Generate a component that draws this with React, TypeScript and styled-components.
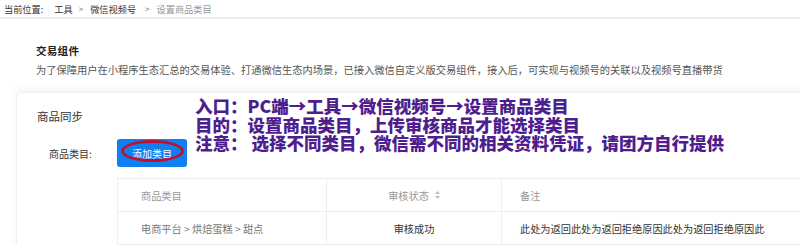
import React from 'react';
import styled, { createGlobalStyle } from 'styled-components';

const GlobalStyle = createGlobalStyle`
  html, body {
    margin: 0;
    padding: 0;
    background: #fff;
    font-family: "Noto Sans CJK SC", "Noto Sans", sans-serif;
  }
  #root {
    width: 800px;
    height: 245px;
    overflow: hidden;
  }
`

const Page = styled.div`
  width: 800px;
  height: 245px;
  overflow: hidden;
  color: #333;
`

const Breadcrumb = styled.div`
  display: flex;
  align-items: center;
  height: 17px;
  padding-left: 4px;
  font-size: 9.2px;
  color: #333;
  border-bottom: 2px solid #eeeeee;
`

const CrumbLabel = styled.span`
  margin-right: 11px;
`

const Crumb = styled.span<{ $current?: boolean }>`
  color: ${p => (p.$current ? '#999' : '#333')};
`

const Sep = styled.span<{ $wide?: boolean }>`
  margin: 0 7px 0 ${p => (p.$wide ? 9 : 6)}px;
  color: #666;
  font-size: 8px;
`

const Intro = styled.div`
  padding: 25px 0 0 36px;
`

const Title = styled.div`
  font-size: 10.6px;
  font-weight: bold;
  line-height: 14px;
  color: #222;
  letter-spacing: 0.2px;
`

const Desc = styled.div`
  margin-top: 5px;
  font-size: 10.25px;
  line-height: 14px;
  color: #555;
  white-space: nowrap;
`

const Card = styled.div`
  position: relative;
  margin: 15px -20px 0 16px;
  padding: 16px 0 0 20px;
  background: #fff;
  border: 1px solid #f0f0f0;
  border-radius: 4px 0 0 0;
  box-shadow: 0 -3px 8px rgba(0, 0, 0, 0.05);
  height: 200px;
`

const CardTitle = styled.div`
  font-size: 11.5px;
  line-height: 14px;
  color: #333;
`

const FormRow = styled.div`
  display: flex;
  align-items: center;
  margin-top: 16px;
  padding-left: 12px;
`

const Label = styled.span`
  width: 68px;
  font-size: 10px;
  color: #333;
`

const AddButton = styled.button`
  position: relative;
  width: 70px;
  height: 28px;
  padding: 0;
  border: none;
  border-radius: 3px;
  background: #0f7ff2;
  color: #fff;
  font-family: inherit;
  font-size: 10px;
`

const RedRing = styled.span`
  position: absolute;
  left: 4px;
  top: 1px;
  width: 57px;
  height: 16px;
  border: 3px solid #c0102b;
  border-radius: 50%;
`

const Note = styled.div`
  position: absolute;
  left: 178px;
  top: 4px;
  font-size: 17.5px;
  line-height: 18.6px;
  font-weight: 900;
  color: #4e1d8e;
  white-space: pre;
`

const Table = styled.div`
  margin: 11px 0 0 80px;
  border-top: 1px solid #eeeeee;
  border-left: 1px solid #eeeeee;
  font-size: 10.2px;
`

const Row = styled.div`
  display: grid;
  grid-template-columns: 208px 175px 1fr;
  height: 32px;
  border-bottom: 1px solid #eeeeee;
`

const Cell = styled.div<{ $align?: 'left' | 'center'; $pad?: number; $color?: string }>`
  display: flex;
  align-items: center;
  justify-content: ${p => (p.$align === 'center' ? 'center' : 'flex-start')};
  padding-left: ${p => p.$pad ?? 0}px;
  color: ${p => p.$color ?? '#333'};
  white-space: nowrap;
  & + & {
    border-left: 1px solid #eeeeee;
  }
`

const SortIcon = styled.svg`
  margin-left: 6px;
`

const Sorter = () => (
  <SortIcon width="5" height="8" viewBox="0 0 5 8">
    <path d="M2.5 0 L5 3 L0 3 Z" fill="#bbb" />
    <path d="M2.5 8 L5 5 L0 5 Z" fill="#bbb" />
  </SortIcon>
)

export default function App() {
  return (
    <Page>
      <GlobalStyle />
      <Breadcrumb>
        <CrumbLabel>当前位置:</CrumbLabel>
        <Crumb>工具</Crumb>
        <Sep>&gt;</Sep>
        <Crumb>微信视频号</Crumb>
        <Sep $wide>&gt;</Sep>
        <Crumb $current>设置商品类目</Crumb>
      </Breadcrumb>
      <Intro>
        <Title>交易组件</Title>
        <Desc>为了保障用户在小程序生态汇总的交易体验、打通微信生态内场景，已接入微信自定义版交易组件，接入后，可实现与视频号的关联以及视频号直播带货</Desc>
      </Intro>
      <Card>
        <CardTitle>商品同步</CardTitle>
        <FormRow>
          <Label>商品类目:</Label>
          <AddButton>
            添加类目
            <RedRing />
          </AddButton>
        </FormRow>
        <Table>
          <Row>
            <Cell $pad={23} $color="#999">商品类目</Cell>
            <Cell $align="center" $color="#999">审核状态<Sorter /></Cell>
            <Cell $pad={18} $color="#999">备注</Cell>
          </Row>
          <Row>
            <Cell $pad={23} $color="#777">电商平台 &gt; 烘焙蛋糕 &gt; 甜点</Cell>
            <Cell $align="center">审核成功</Cell>
            <Cell $pad={18}>此处为返回此处为返回拒绝原因此处为返回拒绝原因此</Cell>
          </Row>
        </Table>
        <Note>
          {'入口：PC端→工具→微信视频号→设置商品类目\n目的：设置商品类目，上传审核商品才能选择类目\n注意： 选择不同类目，微信需不同的相关资料凭证，请团方自行提供'}
        </Note>
      </Card>
    </Page>
  );
}
